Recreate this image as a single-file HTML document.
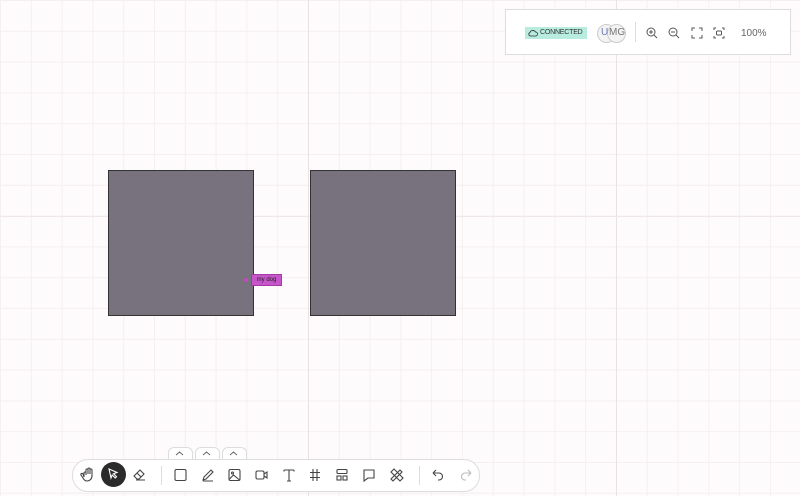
<!DOCTYPE html>
<html><head><style>
body{margin:0;width:800px;height:496px;overflow:hidden;position:relative;font-family:"Liberation Sans",sans-serif;
background-color:#fdfbfb;
background-image:linear-gradient(to right,#f5f0f0 1px,transparent 1px),linear-gradient(to bottom,#f5f0f0 1px,transparent 1px);
background-size:30.8px 30.8px;background-position:0 0;}
.vl{position:absolute;top:0;bottom:0;width:1px;background:#e9e2e2}
.hl{position:absolute;left:0;right:0;height:1px;background:#f0e8e8}
.sq{position:absolute;background:#77727d;border:1px solid #333}
.panel{position:absolute;left:505px;top:9px;width:284px;height:44px;background:#fff;border:1px solid #ddd;}
.tb{position:absolute;left:72px;top:459px;width:406px;height:31px;background:#fff;border:1px solid #ddd;border-radius:16px}
.tab{position:absolute;top:447px;width:23px;height:12px;background:#fff;border:1px solid #ddd;border-bottom:none;border-radius:6px 6px 0 0}
</style></head><body>
<div class="vl" style="left:308px"></div><div class="vl" style="left:616px"></div>
<div class="hl" style="top:216px"></div>
<div class="sq" style="left:108px;top:170px;width:144px;height:144px"></div>
<div class="sq" style="left:310px;top:170px;width:144px;height:144px"></div>
<div style="position:absolute;left:244px;top:278px;width:4px;height:4px;border-radius:50%;background:#c04cc4"></div>
<div style="position:absolute;left:251px;top:274px;width:29px;height:10px;background:#c555c9;border:1px solid #a33aa8;font-size:6px;line-height:10px;text-align:center;color:#222">my dog</div>
<div class="panel">
<div style="position:absolute;left:19px;top:17px;width:62px;height:12px;background:#b7ecde;font-size:7px;line-height:12px;color:#333"><svg width="10" height="8" style="position:absolute;left:3px;top:2px" viewBox="0 0 10 8"><path d="M2.5 7h5a2 2 0 0 0 0-4 3 3 0 0 0-5.5 0.5A1.8 1.8 0 0 0 2.5 7z" fill="none" stroke="#333" stroke-width="0.8"/></svg><span style="position:absolute;left:15px;letter-spacing:-0.2px">CONNECTED</span></div>
<div style="position:absolute;left:91px;top:14px;width:17px;height:17px;border-radius:50%;background:#f3f3f3;border:1px solid #ccc"></div>
<div style="position:absolute;left:101px;top:14px;width:17px;height:17px;border-radius:50%;background:#f3f3f3;border:1px solid #ccc"></div>
<span style="position:absolute;left:95px;top:17px;font-size:10px;color:#6a7ab8">U</span><span style="position:absolute;left:103px;top:17px;font-size:10px;color:#777">MG</span>
<div style="position:absolute;left:129px;top:12px;width:1px;height:20px;background:#ddd"></div>
<svg style="position:absolute;left:140px;top:17px" width="12" height="12" viewBox="0 0 12 12" fill="none" stroke="#555"><circle cx="5" cy="5" r="4"/><path d="M8 8l3 3M3 5h4M5 3v4"/></svg>
<svg style="position:absolute;left:162px;top:17px" width="12" height="12" viewBox="0 0 12 12" fill="none" stroke="#555"><circle cx="5" cy="5" r="4"/><path d="M8 8l3 3M3 5h4"/></svg>
<svg style="position:absolute;left:185px;top:17px" width="12" height="12" viewBox="0 0 12 12" fill="none" stroke="#555"><path d="M1 4V1h3M8 1h3v3M11 8v3H8M4 11H1V8"/></svg>
<svg style="position:absolute;left:207px;top:17px" width="12" height="12" viewBox="0 0 12 12" fill="none" stroke="#555"><path d="M1 3V1h2M9 1h2v2M11 9v2H9M3 11H1V9"/><rect x="3.5" y="4" width="5" height="4" rx="1"/></svg>
<span style="position:absolute;left:235px;top:18px;font-size:10px;color:#666">100%</span>
</div>
<div class="tab" style="left:168px"></div><div class="tab" style="left:195px"></div><div class="tab" style="left:222px"></div>
<svg style="position:absolute;left:168px;top:447px" width="80" height="12"><path d="M8 8l3.5-3 3.5 3M35 8l3.5-3 3.5 3M62 8l3.5-3 3.5 3" fill="none" stroke="#666"/></svg>
<div class="tb">
<div style="position:absolute;left:28px;top:2px;width:25px;height:25px;border-radius:50%;background:#2b2b2b"></div>
<svg width="406" height="31" viewBox="0 0 406 31" style="position:absolute;left:0;top:0" fill="none" stroke="#444" stroke-width="1.1">
<path d="M11 17v-4a1 1 0 0 1 2 0v2-5a1 1 0 0 1 2 0v4-5a1 1 0 0 1 2 0v5-4a1 1 0 0 1 2 0v6a5 5 0 0 1-5 5c-2 0-3-1-4-3l-2-3a1 1 0 0 1 2-1z"/>
<path d="M36 9l8 3.5-3.5 1.2 3 3-1.3 1.3-3-3L38 18z" stroke="#fff"/>
<path d="M64 19l-3-3 6-6 4 4-5 5zM63 20h9M64 13l4 4"/>
<rect x="102" y="9.5" width="11" height="11" rx="1.5"/>
<path d="M130 20l1-3 7-7 2 2-7 7zM130 21h10"/>
<rect x="156" y="9.5" width="11" height="11" rx="1.5"/><circle cx="159.5" cy="13" r="1"/><path d="M156.5 19l4-4 6 5"/>
<rect x="183" y="11" width="8" height="8" rx="1.5"/><path d="M191 14l3-2v6l-3-2"/>
<path d="M211 10h10M216 10v11M214 21h4M211 10v1.5M221 10v1.5"/>
<path d="M240 9v12M244 9v12M237 12.5h10M237 17.5h10"/>
<rect x="264" y="9.5" width="10" height="4" rx="1"/><rect x="264" y="16" width="4" height="4"/><rect x="270" y="16" width="4" height="4"/>
<path d="M291 10h10v8h-6l-4 3z"/>
<path d="M318 12l3-3 9 9-3 3zM320 21l-2-2 9-9 2 2z"/>
</svg>
<div style="position:absolute;left:88px;top:6px;width:1px;height:19px;background:#ddd"></div>
<div style="position:absolute;left:346px;top:6px;width:1px;height:19px;background:#ddd"></div>
<svg width="406" height="31" style="position:absolute;left:0;top:0" fill="none" stroke-width="1.1">
<path d="M360 13h6a3.5 3.5 0 0 1 0 7h-1M360 13l3-3M360 13l3 3" stroke="#444"/>
<path d="M398 13h-6a3.5 3.5 0 0 0 0 7h1M398 13l-3-3M398 13l-3 3" stroke="#bbb"/>
</svg>
</div>
</body></html>
